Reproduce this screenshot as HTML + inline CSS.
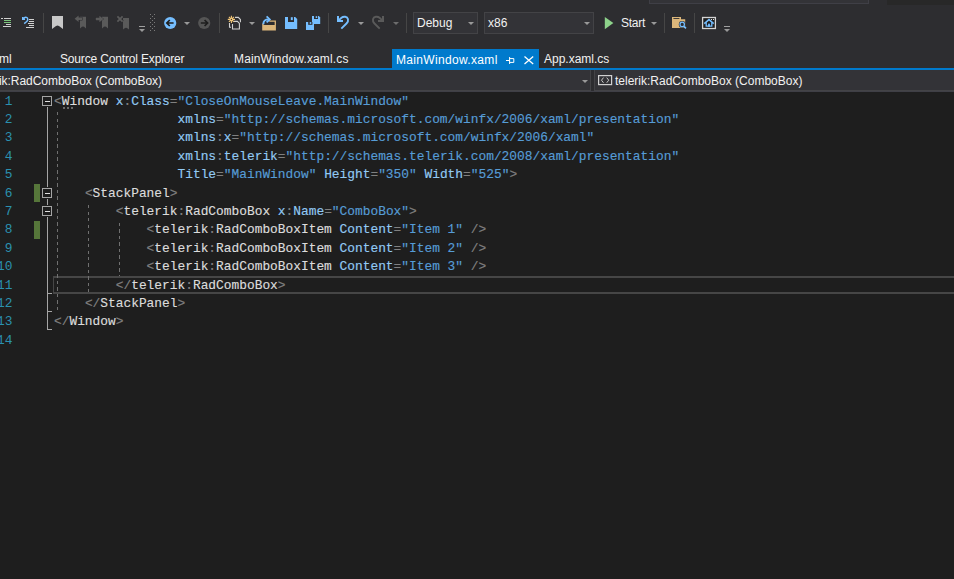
<!DOCTYPE html>
<html><head><meta charset="utf-8">
<style>
*{margin:0;padding:0;box-sizing:border-box}
html,body{width:954px;height:579px;overflow:hidden;background:#2D2D30;font-family:"Liberation Sans",sans-serif;}
.a{position:absolute}
#tb{position:absolute;left:0;top:0;width:954px;height:49px;background:#2D2D30}
.sep{position:absolute;top:13px;width:1px;height:20px;background:#464646}
.combo{position:absolute;top:12px;height:22px;background:#333337;border:1px solid #434346;color:#F1F1F1;font-size:12px}
.ui{font-size:12px;color:#F1F1F1;white-space:pre}
.dd{position:absolute;width:0;height:0;border-left:3px solid transparent;border-right:3px solid transparent;border-top:3px solid #999999}
#tabs{position:absolute;left:0;top:49px;width:954px;height:19px}
.tab{position:absolute;top:49px;height:19px;font-size:12px;color:#F1F1F1;white-space:pre}
#blue{position:absolute;left:0;top:68px;width:954px;height:2px;background:#007ACC}
#nav{position:absolute;left:0;top:70px;width:954px;height:22px;background:#2D2D30}
#ed{position:absolute;left:0;top:92px;width:954px;height:487px;background:#1E1E1E}
.ln{position:absolute;left:-20px;width:32.5px;text-align:right;color:#2B91AF;font-family:"Liberation Mono",monospace;font-size:12.87px;line-height:18px;white-space:pre}
.cl{position:absolute;left:54px;-webkit-text-stroke:0.15px currentColor;font-family:"Liberation Mono",monospace;font-size:12.87px;line-height:18px;white-space:pre;color:#DCDCDC}
.d{color:#808080}
.e{color:#DCDCDC}
.t{color:#92CAF4}
.v{color:#569CD6}
.q{color:#7FB4E8}
</style></head><body>
<div id="tb">
  <!-- quick launch top -->
  <div class="a" style="left:649px;top:-10px;width:220px;height:14px;background:#333337;border:1px solid #3F3F46"></div>
  <div class="a" style="left:887px;top:0;width:67px;height:5px;background:#282828"></div>

<svg class="a" style="left:0;top:0" width="954" height="49" viewBox="0 0 954 49" shape-rendering="geometricPrecision">
 <!-- icon 1: format lines -->
 <g fill="#D0D0D0">
  <rect x="1" y="18" width="2" height="1"/><rect x="4" y="18" width="7" height="1"/>
  <rect x="6" y="24" width="5" height="1"/><rect x="3" y="26" width="8" height="1"/>
 </g>
 <g fill="#7CC47C"><rect x="4" y="20" width="7" height="1"/><rect x="4" y="22" width="7" height="1"/></g>
 <!-- icon 2: undo lines -->
 <g fill="#D0D0D0">
  <rect x="29" y="19" width="5" height="1"/><rect x="29" y="21" width="5" height="1"/>
  <rect x="28" y="23" width="6" height="1"/><rect x="29" y="25" width="5" height="1"/>
  <rect x="26" y="27" width="8" height="1"/>
 </g>
 <path d="M22.8,17 V19.3 H25" fill="none" stroke="#75BEFF" stroke-width="1.6"/>
 <path d="M23,19 L24.2,17.9 C25.5,16.8 27.6,17.2 27.8,19.2 C27.9,20.3 27.3,21 26.4,21.8 L24.2,23.6" fill="none" stroke="#75BEFF" stroke-width="1.5"/>
 <!-- bookmark -->
 <path d="M52,16 H63 V29 L59,26 Q57.5,25.2 56,26 L52,29 Z" fill="#C8C8C8"/>
 <!-- prev bookmark -->
 <path d="M80,16.8 H86 V28.4 L84,26.8 Q83,26.3 82,26.8 L80,28.4 Z" fill="#5A5A5A"/>
 <path d="M74.6,18.8 L78.6,15.6 V17.6 H82.4 V20 H78.6 V22 Z" fill="#5A5A5A" stroke="#2D2D30" stroke-width="1" paint-order="stroke"/>
 <!-- next bookmark -->
 <path d="M102,16.8 H108 V28.4 L106,26.8 Q105,26.3 104,26.8 L102,28.4 Z" fill="#5A5A5A"/>
 <path d="M103.4,19 L99.4,15.8 V17.8 H95.8 V20.2 H99.4 V22.2 Z" fill="#5A5A5A" stroke="#2D2D30" stroke-width="1" paint-order="stroke"/>
 <!-- clear bookmarks -->
 <path d="M123,18 H129 V29.5 L127,27.9 Q126,27.4 125,27.9 L123,29.5 Z" fill="#5A5A5A"/>
 <path d="M117.4,16.4 L122.6,21.6 M122.6,16.4 L117.4,21.6" stroke="#2D2D30" stroke-width="3"/>
 <path d="M117.4,16.4 L122.6,21.6 M122.6,16.4 L117.4,21.6" stroke="#5A5A5A" stroke-width="1.8"/>
 <!-- overflow 1 -->
 <rect x="139" y="26" width="6" height="1" fill="#A0A0A0"/>
 <path d="M139,29 H145 L142,32 Z" fill="#999999"/>
 <!-- grip -->
 <g fill="#7A7A7A">
  <rect x="150" y="14" width="1" height="1"/><rect x="154" y="14" width="1" height="1"/>
  <rect x="152" y="16" width="1" height="1"/>
  <rect x="150" y="18" width="1" height="1"/><rect x="154" y="18" width="1" height="1"/>
  <rect x="152" y="20" width="1" height="1"/>
  <rect x="150" y="22" width="1" height="1"/><rect x="154" y="22" width="1" height="1"/>
  <rect x="152" y="24" width="1" height="1"/>
  <rect x="150" y="26" width="1" height="1"/><rect x="154" y="26" width="1" height="1"/>
  <rect x="152" y="28" width="1" height="1"/>
  <rect x="150" y="30" width="1" height="1"/><rect x="154" y="30" width="1" height="1"/>
 </g>
 <!-- back -->
 <circle cx="170.2" cy="23" r="6.1" fill="#75BEFF"/>
 <path d="M167,23 H173.6 M169.8,20 L166.8,23 L169.8,26" fill="none" stroke="#1E1E1E" stroke-width="1.7"/>
 <!-- forward -->
 <circle cx="204.2" cy="23" r="6.1" fill="#555555"/>
 <path d="M200.8,23 H207.4 M204.6,20 L207.6,23 L204.6,26" fill="none" stroke="#1E1E1E" stroke-width="1.7"/>
 <!-- new project -->
 <g stroke="#D0D0D0" stroke-width="1.1" fill="none">
  <path d="M235,17.4 H238.3 L240.4,19.5 V22.2"/>
  <path d="M232.5,24 V29 H239.4 V23.4 L237.4,21.4 H234"/>
  <path d="M229.5,23 V27.2 H231"/>
 </g>
 <g stroke="#F5C878" stroke-width="1.1" fill="none">
  <path d="M231.4,15.8 V23 M227.8,19.4 H235 M228.9,16.9 L233.9,21.9 M233.9,16.9 L228.9,21.9"/>
 </g>
 <circle cx="231.4" cy="19.4" r="1.6" fill="#F5C878"/><circle cx="231.4" cy="19.4" r="0.6" fill="#2D2D30"/>
 <!-- open folder -->
 <path d="M262.2,30.5 V23.6 H263.6 V25 H275.9 V30.5 Z" fill="#DCB67A"/>
 <path d="M269.2,21.2 H275.3 V25" fill="none" stroke="#DCB67A" stroke-width="1.3"/>
 <path d="M263.4,24.2 C263.2,21 265,19.4 268.8,19.4" fill="none" stroke="#75BEFF" stroke-width="1.9"/>
 <path d="M266.6,16.4 L269.8,19.4 L266.6,22.4" fill="none" stroke="#75BEFF" stroke-width="1.8"/>
 <!-- save -->
 <path d="M285,17 H295.2 L297.2,19 V29 H285 Z" fill="#75BEFF"/>
 <rect x="288" y="17" width="6" height="5" fill="#2D2D30"/>
 <rect x="290.8" y="17.2" width="2" height="2.9" fill="#75BEFF"/>
 <!-- save all -->
 <path d="M312,16 H318.8 L320.2,17.4 V24 H312 Z" fill="#75BEFF"/>
 <rect x="314" y="16" width="4" height="3" fill="#2D2D30"/>
 <rect x="315.7" y="16.2" width="1.5" height="1.8" fill="#75BEFF"/>
 <path d="M306,22 H314 V30 H306 Z" fill="#75BEFF" stroke="#2D2D30" stroke-width="0"/>
 <rect x="308.2" y="22" width="4.2" height="2.8" fill="#2D2D30"/>
 <rect x="309.7" y="22.1" width="1.6" height="1.8" fill="#75BEFF"/>
 <!-- undo -->
 <path d="M338,16 V21 H343" fill="none" stroke="#75BEFF" stroke-width="2"/>
 <path d="M338.6,20.4 L341.5,17.8 C343.5,16 347.3,16.4 348,19.3 C348.4,21 347.8,22.2 346.5,23.5 L341.3,28.7" fill="none" stroke="#75BEFF" stroke-width="1.9"/>
 <!-- redo -->
 <path d="M383,16 V21 H378" fill="none" stroke="#5A5A5A" stroke-width="2"/>
 <path d="M382.4,20.4 L379.5,17.8 C377.5,16 373.7,16.4 373,19.3 C372.6,21 373.2,22.2 374.5,23.5 L379.7,28.7" fill="none" stroke="#5A5A5A" stroke-width="1.9"/>
 <!-- play -->
 <path d="M604.8,16.9 L613.4,23 L604.8,29.2 Z" fill="#8DD28A"/>
 <!-- folder search -->
 <path d="M672,17 H681 V19.2 H685.2 V28 H672 Z" fill="#DCB67A"/>
 <rect x="673.4" y="18.1" width="6" height="0.9" fill="#2D2D30"/>
 <circle cx="682.2" cy="24.4" r="3.4" fill="#2D2D30"/>
 <circle cx="682.2" cy="24.4" r="2.2" fill="none" stroke="#75BEFF" stroke-width="1.2"/>
 <path d="M683.8,26.2 L686,28.4" stroke="#75BEFF" stroke-width="1.6"/>
 <!-- home window -->
 <rect x="702.6" y="17.5" width="12.8" height="11" fill="#1E1E1E" stroke="#D4D4D4" stroke-width="1.3"/>
 <rect x="711" y="19" width="1" height="1" fill="#E0E0E0"/><rect x="713" y="19" width="1" height="1" fill="#E0E0E0"/>
 <path d="M704.3,23.6 L709,19.6 L713.7,23.6" fill="none" stroke="#75BEFF" stroke-width="1.5"/>
 <path d="M706.2,22.6 V26.2 H711.8 V22.6" fill="none" stroke="#75BEFF" stroke-width="1.3"/>
 <path d="M708,26.8 V24.6 Q708,23.4 709,23.4 Q710,23.4 710,24.6 V26.8 Z" fill="#75BEFF"/>
 <!-- overflow 2 -->
 <rect x="724" y="26" width="6" height="1" fill="#A0A0A0"/>
 <path d="M724,29 H730 L727,32 Z" fill="#999999"/>
</svg>

  <div class="sep" style="left:43px"></div>
  <div class="sep" style="left:219px"></div>
  <div class="sep" style="left:328px"></div>
  <div class="sep" style="left:406px"></div>
  <div class="sep" style="left:664px"></div>
  <div class="sep" style="left:694px"></div>

  <div class="combo" style="left:413px;width:65px"></div>
  <div class="a ui" style="left:417px;top:15px;line-height:16px">Debug</div>
  <div class="dd" style="left:468px;top:22px"></div>
  <div class="combo" style="left:484px;width:110px"></div>
  <div class="a ui" style="left:488px;top:15px;line-height:16px">x86</div>
  <div class="dd" style="left:584px;top:22px"></div>

  <div class="a ui" style="left:621px;top:15px;line-height:16px;letter-spacing:-0.25px">Start</div>
  <div class="dd" style="left:651px;top:22px"></div>
  <div class="dd" style="left:184px;top:22px"></div>
  <div class="dd" style="left:249px;top:22px"></div>
  <div class="dd" style="left:358px;top:22px"></div>
  <div class="dd" style="left:393px;top:22px;border-top-color:#6D6D6D"></div>
</div>

<div class="a ui" style="left:-1px;top:51px;line-height:16px">ml</div>
<div class="a ui" style="left:60px;top:51px;line-height:16px;letter-spacing:-0.16px">Source Control Explorer</div>
<div class="a ui" style="left:234px;top:51px;line-height:16px;letter-spacing:0.14px">MainWindow.xaml.cs</div>
<div class="a" style="left:392px;top:49px;width:147px;height:19px;background:#007ACC"></div>
<div class="a ui" style="left:396px;top:52px;line-height:16px;color:#FFFFFF;letter-spacing:0.33px">MainWindow.xaml</div>
<div class="a ui" style="left:544px;top:51px;line-height:16px">App.xaml.cs</div>
<svg class="a" style="left:500px;top:50px" width="40" height="18" viewBox="500 50 40 18">
 <path d="M506,60.5 H509.5 M509.6,57 V64 M509.6,58.6 H513.8 V62.4 H509.6" fill="none" stroke="#FFFFFF" stroke-width="1"/>
 <path d="M524.5,56.5 L533.2,64 M533.2,56.5 L524.5,64" fill="none" stroke="#FFFFFF" stroke-width="1.3"/>
</svg>
<div id="blue"></div>

<div id="nav">
  <div class="a" style="left:-10px;top:0px;width:601px;height:21px;background:#333337;border:1px solid #434346;border-top:none"></div>
  <div class="a ui" style="left:-5px;top:3px;line-height:16px;letter-spacing:-0.04px">rik:RadComboBox (ComboBox)</div>
  <div class="dd" style="left:582px;top:10px"></div>
  <div class="a" style="left:594px;top:0px;width:370px;height:21px;background:#333337;border:1px solid #434346;border-top:none"></div>
  <svg class="a" style="left:596px;top:3px" width="20" height="16" viewBox="596 73 20 16">
   <rect x="598.6" y="75.6" width="13" height="9" fill="none" stroke="#D0D0D0" stroke-width="1.2"/>
   <path d="M603.5,77.6 L601.5,80.2 L603.5,82.8 M606.7,77.6 L608.7,80.2 L606.7,82.8" fill="none" stroke="#C8C8C8" stroke-width="1"/>
  </svg>
  <div class="a ui" style="left:615px;top:3px;line-height:16px">telerik:RadComboBox (ComboBox)</div>
</div>
<div class="a" style="left:0;top:91px;width:954px;height:1px;background:#3F3F46"></div>

<div id="ed"></div>
<div id="marg">
<div class="a" style="left:53px;top:276px;width:910px;height:18px;border:2px solid #464646;border-left-width:1px;border-right:none"></div>
<div class="a" style="left:34px;top:184px;width:6px;height:18px;background:#56763A"></div>
<div class="a" style="left:34px;top:221px;width:6px;height:18px;background:#56763A"></div>
<div class="a" style="left:57px;top:112px;width:1px;height:198px;background:repeating-linear-gradient(to bottom,#707070 0,#707070 3.4px,transparent 3.4px,transparent 6.5px)"></div>
<div class="a" style="left:88px;top:204.5px;width:1px;height:87.5px;background:repeating-linear-gradient(to bottom,#707070 0,#707070 3.4px,transparent 3.4px,transparent 6.5px)"></div>
<div class="a" style="left:119px;top:222.5px;width:1px;height:53.5px;background:repeating-linear-gradient(to bottom,#707070 0,#707070 3.4px,transparent 3.4px,transparent 6.5px)"></div>
<div class="a" style="left:47px;top:107px;width:1px;height:80px;background:#A5A5A5"></div>
<div class="a" style="left:47px;top:199px;width:1px;height:6px;background:#A5A5A5"></div>
<div class="a" style="left:47px;top:217px;width:1px;height:113px;background:#A5A5A5"></div>
<div class="a" style="left:47px;top:293px;width:5px;height:1px;background:#A5A5A5"></div>
<div class="a" style="left:47px;top:311px;width:5px;height:1px;background:#A5A5A5"></div>
<div class="a" style="left:47px;top:329px;width:5px;height:1px;background:#A5A5A5"></div>
<div class="a" style="left:42px;top:96px;width:10px;height:10px;border:1px solid #A5A5A5;background:#1E1E1E"></div>
<div class="a" style="left:45px;top:101px;width:5px;height:1px;background:#E0E0E0"></div>
<div class="a" style="left:42px;top:188px;width:10px;height:10px;border:1px solid #A5A5A5;background:#1E1E1E"></div>
<div class="a" style="left:45px;top:193px;width:5px;height:1px;background:#E0E0E0"></div>
<div class="a" style="left:42px;top:206px;width:10px;height:10px;border:1px solid #A5A5A5;background:#1E1E1E"></div>
<div class="a" style="left:45px;top:211px;width:5px;height:1px;background:#E0E0E0"></div>
<div class="a" style="left:63px;top:107px;width:2px;height:2px;background:#6A6A6A"></div>
<div class="a" style="left:67px;top:107px;width:2px;height:2px;background:#6A6A6A"></div>
<div class="a" style="left:71px;top:107px;width:2px;height:2px;background:#6A6A6A"></div>
</div><!--/marg-->
<div id="code">
<div class="ln" style="top:92.60px">1</div>
<div class="cl" style="top:92.60px"><span class="d">&lt;</span><span class="e">Window</span> <span class="t">x</span><span class="d">:</span><span class="t">Class</span><span class="d">=</span><span class="v">&quot;CloseOnMouseLeave.MainWindow&quot;</span></div>
<div class="ln" style="top:110.98px">2</div>
<div class="cl" style="top:110.98px">                <span class="t">xmlns</span><span class="d">=</span><span class="v">&quot;http://schemas.microsoft.com/winfx/2006/xaml/presentation&quot;</span></div>
<div class="ln" style="top:129.36px">3</div>
<div class="cl" style="top:129.36px">                <span class="t">xmlns</span><span class="d">:</span><span class="t">x</span><span class="d">=</span><span class="v">&quot;http://schemas.microsoft.com/winfx/2006/xaml&quot;</span></div>
<div class="ln" style="top:147.74px">4</div>
<div class="cl" style="top:147.74px">                <span class="t">xmlns</span><span class="d">:</span><span class="t">telerik</span><span class="d">=</span><span class="v">&quot;http://schemas.telerik.com/2008/xaml/presentation&quot;</span></div>
<div class="ln" style="top:166.12px">5</div>
<div class="cl" style="top:166.12px">                <span class="t">Title</span><span class="d">=</span><span class="v">&quot;MainWindow&quot;</span> <span class="t">Height</span><span class="d">=</span><span class="v">&quot;350&quot;</span> <span class="t">Width</span><span class="d">=</span><span class="v">&quot;525&quot;</span><span class="d">&gt;</span></div>
<div class="ln" style="top:184.50px">6</div>
<div class="cl" style="top:184.50px">    <span class="d">&lt;</span><span class="e">StackPanel</span><span class="d">&gt;</span></div>
<div class="ln" style="top:202.88px">7</div>
<div class="cl" style="top:202.88px">        <span class="d">&lt;</span><span class="e">telerik</span><span class="d">:</span><span class="e">RadComboBox</span> <span class="t">x</span><span class="d">:</span><span class="t">Name</span><span class="d">=</span><span class="v">&quot;ComboBox&quot;</span><span class="d">&gt;</span></div>
<div class="ln" style="top:221.26px">8</div>
<div class="cl" style="top:221.26px">            <span class="d">&lt;</span><span class="e">telerik</span><span class="d">:</span><span class="e">RadComboBoxItem</span> <span class="t">Content</span><span class="d">=</span><span class="v">&quot;Item 1&quot;</span> <span class="d">/&gt;</span></div>
<div class="ln" style="top:239.64px">9</div>
<div class="cl" style="top:239.64px">            <span class="d">&lt;</span><span class="e">telerik</span><span class="d">:</span><span class="e">RadComboBoxItem</span> <span class="t">Content</span><span class="d">=</span><span class="v">&quot;Item 2&quot;</span> <span class="d">/&gt;</span></div>
<div class="ln" style="top:258.02px">10</div>
<div class="cl" style="top:258.02px">            <span class="d">&lt;</span><span class="e">telerik</span><span class="d">:</span><span class="e">RadComboBoxItem</span> <span class="t">Content</span><span class="d">=</span><span class="v">&quot;Item 3&quot;</span> <span class="d">/&gt;</span></div>
<div class="ln" style="top:277.00px">11</div>
<div class="cl" style="top:277.00px">        <span class="d">&lt;/</span><span class="e">telerik</span><span class="d">:</span><span class="e">RadComboBox</span><span class="d">&gt;</span></div>
<div class="ln" style="top:294.78px">12</div>
<div class="cl" style="top:294.78px">    <span class="d">&lt;/</span><span class="e">StackPanel</span><span class="d">&gt;</span></div>
<div class="ln" style="top:313.16px">13</div>
<div class="cl" style="top:313.16px"><span class="d">&lt;/</span><span class="e">Window</span><span class="d">&gt;</span></div>
<div class="ln" style="top:331.54px">14</div>
</div><!--/code-->
</body></html>
